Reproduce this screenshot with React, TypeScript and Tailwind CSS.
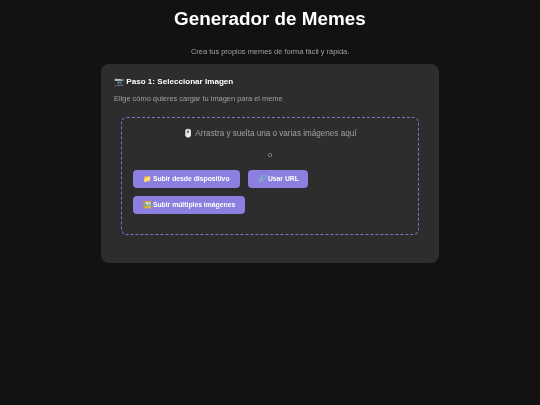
export default function App() {
  const btn = "h-[18px] px-[10px] bg-[#8b80e0] rounded-[4px]";
  const btnText = "block text-white text-[6.8px] font-bold will-change-transform";
  return (
    <div className="min-h-[405px] bg-[#121212] font-['Liberation_Sans',sans-serif] antialiased flex flex-col items-center">
      <h1 className="text-[18.85px] leading-[22px] font-bold text-white mt-[8px] text-center will-change-transform">Generador de Memes</h1>
      <p className="text-[7.45px] leading-[10px] text-[#a0a0a0] mt-[17px] text-center will-change-transform">Crea tus propios memes de forma fácil y rápida.</p>
      <div className="mt-[7px] w-[338px] h-[199px] bg-[#2d2d2d] rounded-[8px] px-[13px] pt-[12px]">
        <h2 className="text-[8.1px] leading-[11px] font-bold text-white will-change-transform">📷 Paso 1: Seleccionar Imagen</h2>
        <p className="text-[7.45px] leading-[10px] text-[#a0a0a0] mt-[7px] will-change-transform">Elige cómo quieres cargar tu imagen para el meme</p>
        <div className="mt-[13px] mx-[7px] h-[118px] border border-dashed border-[#7f75c8] rounded-[6px] px-[11px] pt-[10px]">
          <p className="text-[8.15px] leading-[11px] text-[#a0a0a0] text-center will-change-transform">🖱️ Arrastra y suelta una o varias imágenes aquí</p>
          <p className="text-[7.45px] leading-[10px] text-[#a0a0a0] text-center mt-[11px] will-change-transform">o</p>
          <div className="flex flex-wrap gap-[8px] mt-[10px]">
            <button className={btn}><span className={btnText}>📁 Subir desde dispositivo</span></button>
            <button className={btn}><span className={btnText}>🔗 Usar URL</span></button>
            <button className={btn}><span className={btnText}>🖼️ Subir múltiples imágenes</span></button>
          </div>
        </div>
      </div>
    </div>
  );
}
